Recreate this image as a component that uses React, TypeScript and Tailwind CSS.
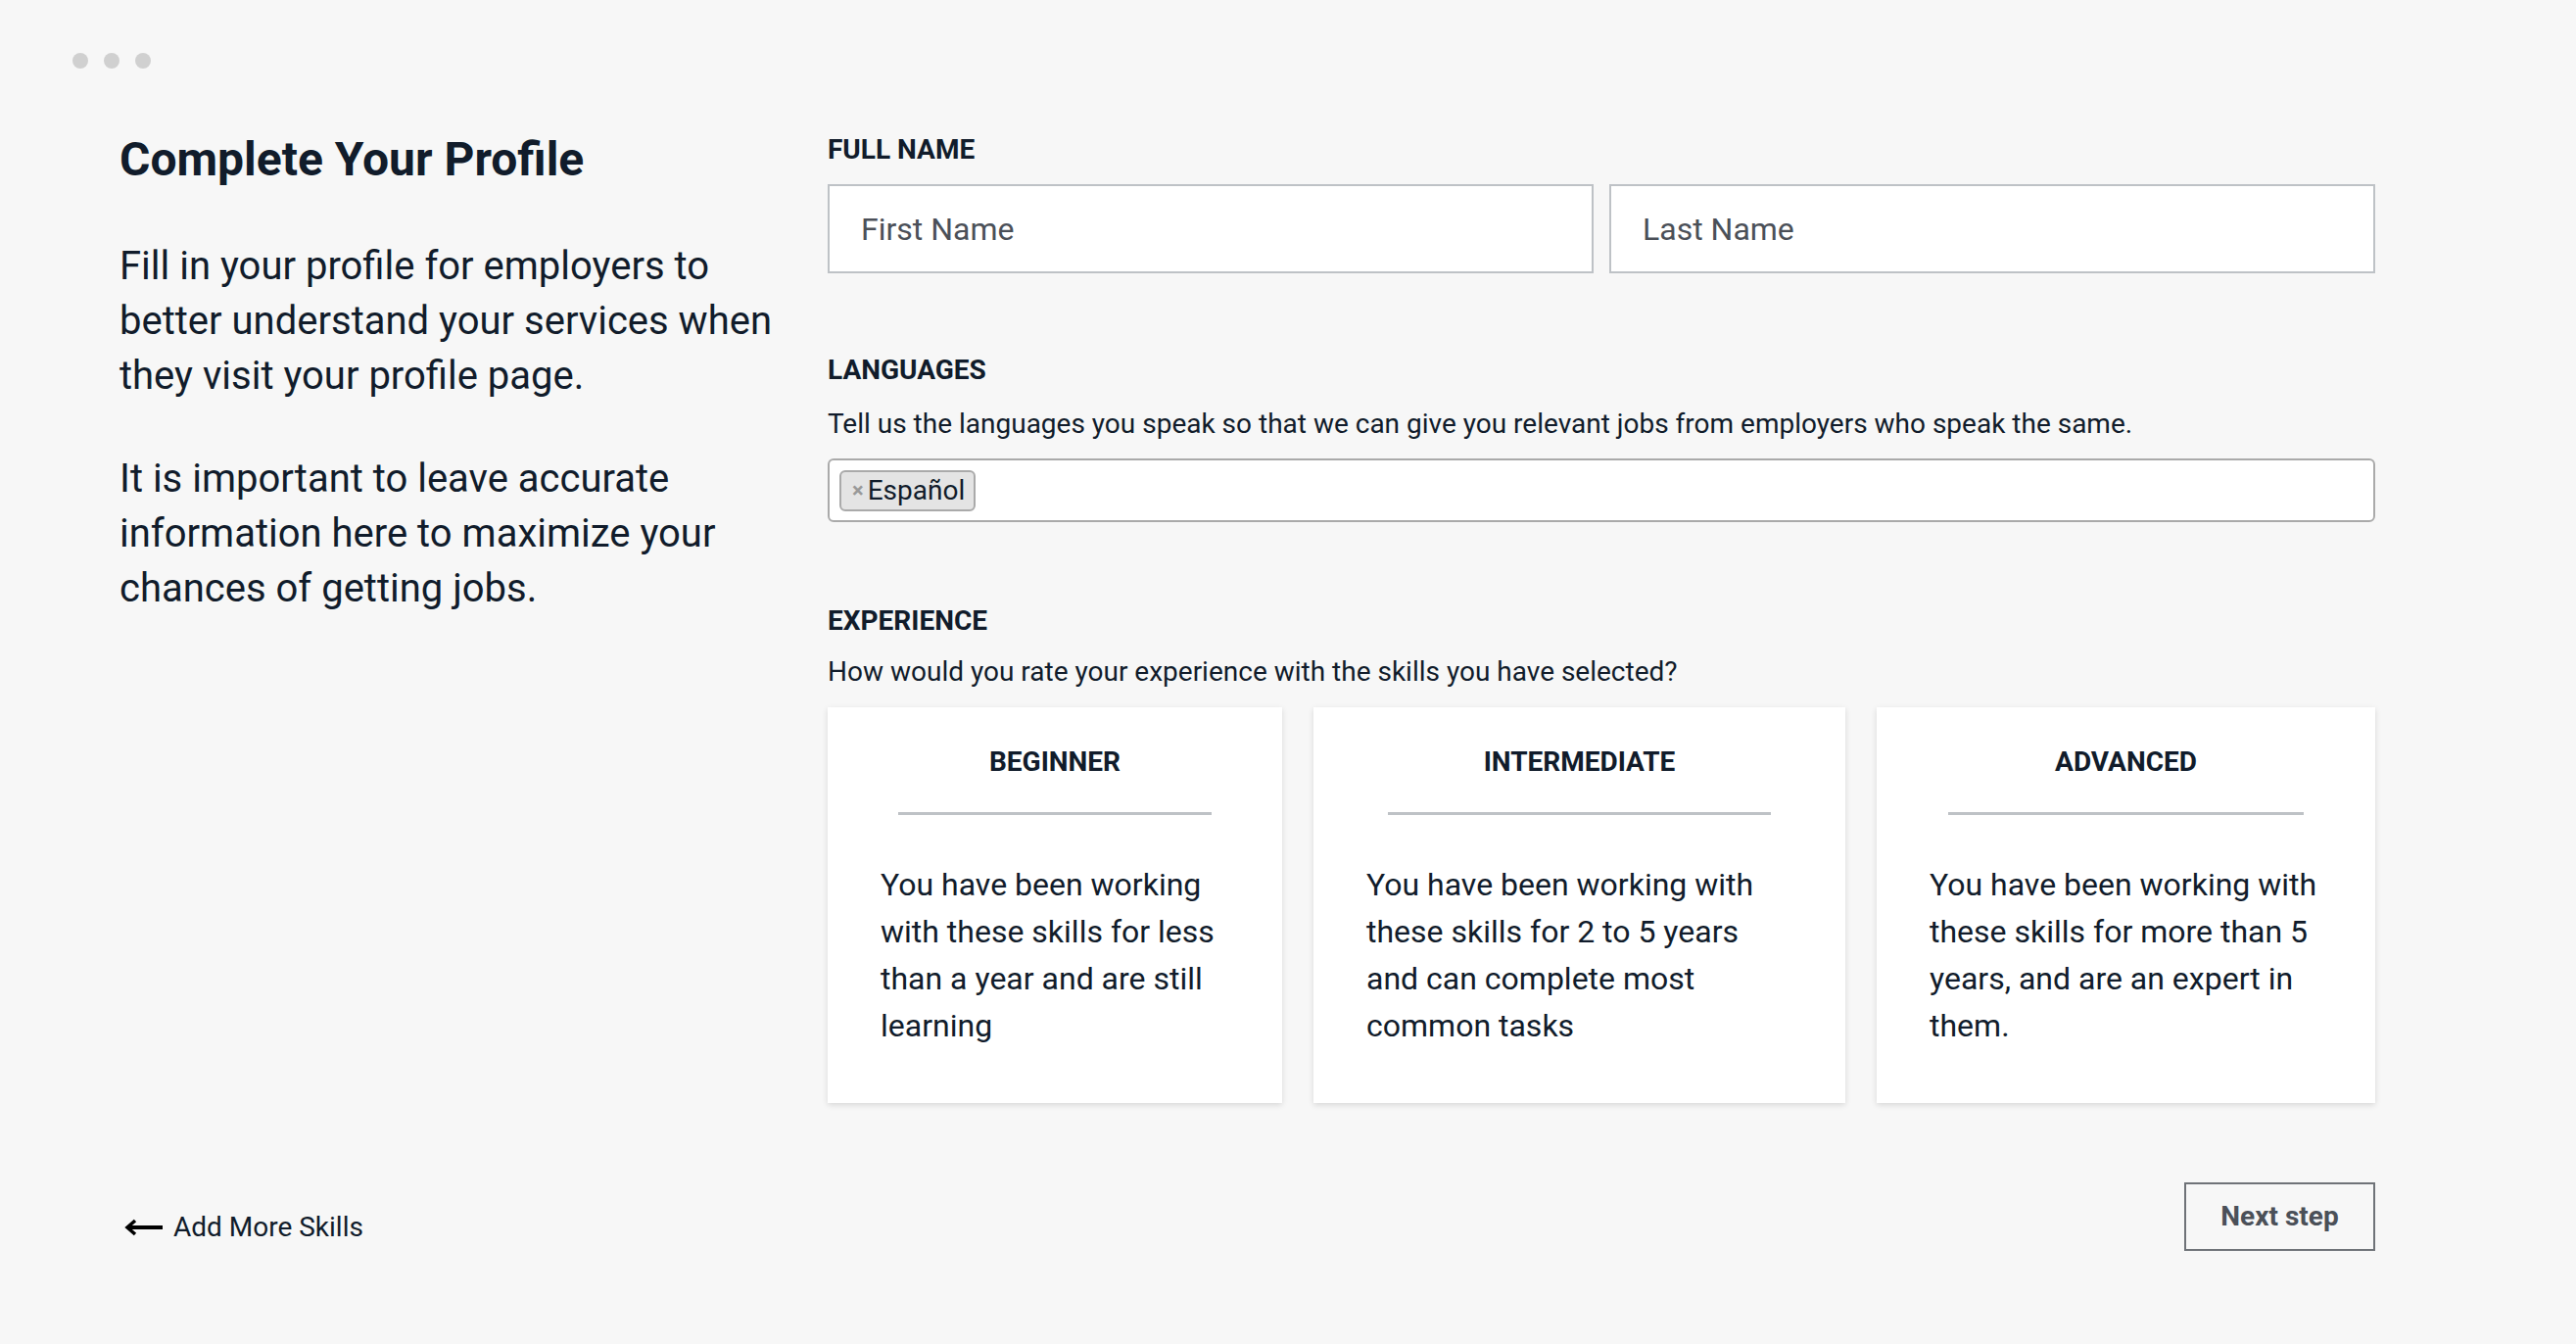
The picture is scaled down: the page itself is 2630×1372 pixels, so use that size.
import React from "react";

const cards = [
  {
    title: "BEGINNER",
    body: "You have been working with these skills for less than a year and are still learning",
    w: "w-[464px]",
    pad: "pl-[54px] pr-[54px]",
    line: "mx-[72px]",
  },
  {
    title: "INTERMEDIATE",
    body: "You have been working with these skills for 2 to 5 years and can complete most common tasks",
    w: "w-[543px]",
    pad: "pl-[54px] pr-[62px]",
    line: "mx-[76px]",
  },
  {
    title: "ADVANCED",
    body: "You have been working with these skills for more than 5 years, and are an expert in them.",
    w: "flex-1",
    pad: "pl-[54px] pr-[48px]",
    line: "mx-[73px]",
  },
];

export default function App() {
  return (
    <div className="min-h-screen bg-[#f7f7f7] font-['Roboto',sans-serif] text-[#111c2b]">
      <div className="flex gap-[16px] pl-[74px] pt-[54px]">
        <span className="h-[16px] w-[16px] rounded-full bg-[#d0d0d0]" />
        <span className="h-[16px] w-[16px] rounded-full bg-[#d0d0d0]" />
        <span className="h-[16px] w-[16px] rounded-full bg-[#d0d0d0]" />
      </div>

      <div className="mt-[67px] flex gap-[45px] pl-[122px] pr-[205px]">
        <div className="w-[678px] shrink-0">
          <h1 className="text-[48px] font-bold leading-[52px]">Complete Your Profile</h1>
          <p className="mt-[55px] text-[40px] leading-[56px]">
            Fill in your profile for employers to better understand your services when they visit your
            profile page.
          </p>
          <p className="mt-[49px] text-[40px] leading-[56px]">
            It is important to leave accurate information here to maximize your chances of getting jobs.
          </p>
        </div>

        <div className="flex-1">
          <div className="text-[28px] font-bold leading-[32px]">FULL NAME</div>
          <div className="mt-[19px] flex h-[91px] gap-[16px]">
            <div className="flex flex-1 items-center border-2 border-[#bec2c6] bg-white px-[32px] text-[32px] text-[#4b5058]">
              First Name
            </div>
            <div className="flex flex-1 items-center border-2 border-[#bec2c6] bg-white px-[32px] text-[32px] text-[#4b5058]">
              Last Name
            </div>
          </div>

          <div className="mt-[83px] text-[28px] font-bold leading-[32px]">LANGUAGES</div>
          <div className="mt-[23px] text-[28px] leading-[32px]">
            Tell us the languages you speak so that we can give you relevant jobs from employers who speak the same.
          </div>
          <div className="mt-[19px] flex h-[65px] items-center rounded-[6px] border-2 border-[#aaaaaa] bg-white px-[10px]">
            <div className="flex h-[42px] items-center rounded-[6px] border-2 border-[#aaaaaa] bg-[#e4e4e4] pl-[11px] pr-[9px]">
              <span className="mr-[4px] text-[22px] font-bold leading-none text-[#999999]">×</span>
              <span className="text-[28px] leading-none text-[#111c2b]">Español</span>
            </div>
          </div>

          <div className="mt-[85px] text-[28px] font-bold leading-[32px]">EXPERIENCE</div>
          <div className="mt-[20px] text-[28px] leading-[32px]">
            How would you rate your experience with the skills you have selected?
          </div>

          <div className="mt-[20px] flex gap-[32px]">
            {cards.map((c) => (
              <div
                key={c.title}
                className={`${c.w} bg-white pb-[55px] pt-[40px] shadow-[0_2px_6px_rgba(0,0,0,0.13)]`}
              >
                <div className="text-center text-[28px] font-bold leading-[32px]">{c.title}</div>
                <div className={`${c.line} mt-[35px] h-[3px] bg-[#bec2c6]`} />
                <p className={`${c.pad} mt-[47px] text-[32px] leading-[48px]`}>{c.body}</p>
              </div>
            ))}
          </div>
        </div>
      </div>

      <div className="mt-[81px] flex items-start justify-between pl-[127px] pr-[205px]">
        <div className="mt-[30px] flex items-center gap-[11px]">
          <svg width="39" height="18" viewBox="0 0 39 18" fill="none">
            <path d="M39 9H4" stroke="#000" strokeWidth="4" />
            <path d="M11 2L3 9l8 7" stroke="#000" strokeWidth="3.5" fill="none" />
          </svg>
          <span className="text-[28px] leading-[32px]">Add More Skills</span>
        </div>
        <button className="flex h-[70px] w-[195px] items-center justify-center border-2 border-[#6f7378] text-[28px] font-bold text-[#4b5058]">
          Next step
        </button>
      </div>
    </div>
  );
}
